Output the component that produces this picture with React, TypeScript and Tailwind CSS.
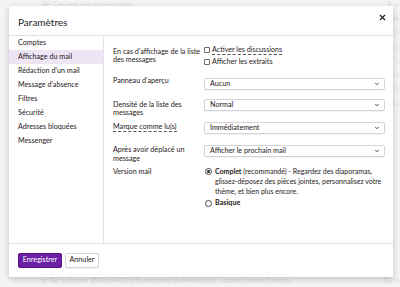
import { X, ChevronDown } from "lucide-react";

const menu = [
  "Comptes",
  "Affichage du mail",
  "Rédaction d'un mail",
  "Message d'absence",
  "Filtres",
  "Sécurité",
  "Adresses bloquées",
  "Messenger",
];

function Select({ value }: { value: string }) {
  return (
    <div className="flex h-[12px] items-center justify-between rounded-[2px] border border-[#d4d4d6] bg-white pl-[5px] pr-[4px] shadow-[0_1px_1px_rgba(0,0,0,0.05)]">
      <span>{value}</span>
      <ChevronDown size={6} strokeWidth={3.5} className="text-[#333]" />
    </div>
  );
}

function Checkbox() {
  return <span className="h-[6px] w-[6px] shrink-0 rounded-[1px] border border-[#666] bg-white" />;
}

export default function App() {
  return (
    <div
      className="relative h-[287px] w-[400px] overflow-hidden bg-[#f4f4f5] text-[#1f2022]"
      style={{ fontFamily: "Lato, 'Open Sans', sans-serif" }}
    >
      {/* faded mail list behind the dialog */}
      <div className="flex text-[7px] leading-[8px] text-[#dcdcde]">
        <div className="pl-[42px]">Re: Ceci est une conversation</div>
        <div className="ml-auto mr-[1px] flex flex-col gap-[6px] text-right">
          <span>8 m</span>
          <span>8 m</span>
          <span>8 o</span>
          <span>8 c</span>
          <span>7 c</span>
          <span>4 s</span>
          <span>3 s</span>
          <span>1 j</span>
        </div>
      </div>
      <div className="absolute bottom-[2px] left-[42px] text-[7px] text-[#dcdcde]">
        tr: Re: colloque SNUipp-FSU à la demande de Pelloux Eu… ication contre l'homop
      </div>
      <div className="absolute bottom-[2px] right-[1px] text-[7px] text-[#dcdcde]">28 m</div>

      {/* dialog */}
      <div className="absolute left-[9px] top-[6px] flex h-[271px] w-[384px] flex-col bg-white text-[7.2px] shadow-[0_2px_6px_rgba(0,0,0,0.22)]">
        <div className="flex h-[30px] items-start justify-between border-b border-[#e2e2e6] pl-[9px] pr-[6px]">
          <span className="mt-[10px] text-[10px] leading-[13px] text-[#1d1d1f]">Paramètres</span>
          <X size={9} strokeWidth={3} className="mt-[7px] text-[#1d1d1f]" />
        </div>

        <div className="flex h-[207px]">
          <div className="flex w-[95px] shrink-0 flex-col border-r border-[#e2e2e6]">
            {menu.map((m) => (
              <div
                key={m}
                className={
                  "flex h-[14px] items-center pl-[9px] " +
                  (m === "Affichage du mail" ? "bg-[#ede4f4]" : "")
                }
              >
                {m}
              </div>
            ))}
          </div>

          <div className="flex flex-1 flex-col pl-[9px] pr-[10px] pt-[8px]">
            <div className="flex h-[34px]">
              <div className="mt-[3.5px] w-[91px] shrink-0 leading-[8.5px]">
                En cas d'affichage de la liste
                <br />
                des messages
              </div>
              <div className="flex flex-col">
                <label className="flex h-[12px] items-center gap-[2px]">
                  <Checkbox />
                  <span className="border-b border-dashed border-[#555] leading-[8px]">Activer les discussions</span>
                </label>
                <label className="flex h-[12px] items-center gap-[2px]">
                  <Checkbox />
                  <span>Afficher les extraits</span>
                </label>
              </div>
            </div>

            <div className="flex h-[21px]">
              <div className="mt-[-1px] w-[91px] shrink-0 leading-[8.5px]">Panneau d'aperçu</div>
              <div className="flex-1">
                <Select value="Aucun" />
              </div>
            </div>

            <div className="flex h-[23px]">
              <div className="mt-[1.5px] w-[91px] shrink-0 leading-[8.5px]">
                Densité de la liste des
                <br />
                messages
              </div>
              <div className="flex-1">
                <Select value="Normal" />
              </div>
            </div>

            <div className="flex h-[23px]">
              <div className="mt-[1px] w-[91px] shrink-0 leading-[8.5px]">
                <span className="border-b border-dashed border-[#555]">Marque comme lu(s)</span>
              </div>
              <div className="flex-1">
                <Select value="Immédiatement" />
              </div>
            </div>

            <div className="flex h-[21px]">
              <div className="mt-[1px] w-[91px] shrink-0 leading-[8.5px]">
                Après avoir déplacé un
                <br />
                message
              </div>
              <div className="flex-1">
                <Select value="Afficher le prochain mail" />
              </div>
            </div>

            <div className="flex">
              <div className="mt-[1.5px] w-[91px] shrink-0 leading-[8.5px]">Version mail</div>
              <div className="flex flex-col gap-[2px] pl-[1px]">
                <div className="flex gap-[3px]">
                  <span className="mt-[1.5px] flex h-[7px] w-[7px] shrink-0 items-center justify-center rounded-full border border-[#444]">
                    <span className="h-[3px] w-[3px] rounded-full bg-[#222]" />
                  </span>
                  <p className="w-[170px] text-[7px] leading-[10px]">
                    <b>Complet</b> (recommandé) - Regardez des diaporamas, glissez-déposez des pièces jointes, personnalisez votre thème, et bien plus encore.
                  </p>
                </div>
                <div className="flex items-center gap-[3px]">
                  <span className="h-[7px] w-[7px] rounded-full border border-[#444]" />
                  <b className="leading-[10px]">Basique</b>
                </div>
              </div>
            </div>
          </div>
        </div>

        <div className="flex flex-1 items-center gap-[3px] border-t border-[#e2e2e6] pl-[9px]">
          <button className="h-[15px] w-[44px] rounded-[2px] border border-[#55148a] bg-[#6b1fa5] text-[7.2px] text-white">
            Enregistrer
          </button>
          <button className="h-[15px] w-[34px] rounded-[2px] border border-[#d4d4d6] bg-white text-[7.2px] shadow-[0_1px_1px_rgba(0,0,0,0.06)]">
            Annuler
          </button>
        </div>
      </div>
    </div>
  );
}
